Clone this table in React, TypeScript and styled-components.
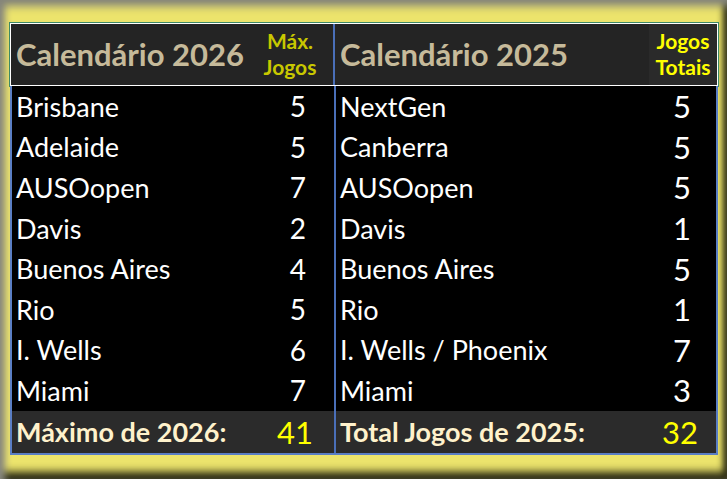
import React from "react";
import styled, { createGlobalStyle } from "styled-components";

const GlobalStyle = createGlobalStyle`
  body {
    margin: 0;
    background: #000;
    font-family: "Lato", "Open Sans", sans-serif;
  }
`;

const Frame = styled.div`
  width: 727px;
  height: 479px;
  box-sizing: border-box;
  padding: 23px 9px 22px 10px;
  background: #ece46c;
  box-shadow: inset 0 11px 9px -5px #85857a, inset 8px 0 7px -3px #8a8a80,
    inset -7px 0 6px -3px #2c2c10, inset 0 -11px 9px -4px #242410;
`;

const Board = styled.div`
  display: flex;
  flex-direction: column;
`;

const Head = styled.div`
  display: grid;
  grid-template-columns: 324px 1fr;
  height: 61px;
  background: #242424;
  border: 1px solid #fff;
  box-shadow: 0 0 0 1px #3f8a66;
`;

const HeadCell = styled.div<{ $divider?: boolean }>`
  display: flex;
  align-items: stretch;
  border-right: ${(p) => (p.$divider ? "2px solid #4a6fb8" : "none")};
`;

const Title = styled.div`
  flex: 1;
  display: flex;
  align-items: center;
  padding-left: 5px;
  padding-bottom: 2px;
  color: #c6ba9a;
  font-size: 31px;
  font-weight: 700;
  white-space: nowrap;
`;

const ColHead = styled.div<{ $bright?: boolean }>`
  width: ${(p) => (p.$bright ? "68px" : "60px")};
  margin-right: ${(p) => (p.$bright ? "0" : "13px")};
  display: flex;
  flex-direction: column;
  justify-content: center;
  align-items: center;
  padding-bottom: 2px;
  font-size: 21px;
  font-weight: 700;
  line-height: 26px;
  color: ${(p) => (p.$bright ? "#ffff00" : "#c8c800")};
  background: ${(p) => (p.$bright ? "#2a2a2a" : "transparent")};
`;

const Body = styled.div`
  border: 2px solid #5a7ec4;
  border-top: none;
  background: #000;
`;

const Row = styled.div<{ $total?: boolean }>`
  display: grid;
  grid-template-columns: 324px 1fr;
  height: ${(p) => (p.$total ? "42px" : "40.6px")};
  background: ${(p) => (p.$total ? "#2b2b2b" : "#000")};
`;

const Cell = styled.div<{ $divider?: boolean }>`
  display: flex;
  align-items: center;
  justify-content: space-between;
  padding-left: 4px;
  padding-right: ${(p) => (p.$divider ? "28px" : "25px")};
  border-right: ${(p) => (p.$divider ? "2px solid #4a6fb8" : "none")};
`;

const Name = styled.span<{ $total?: boolean }>`
  color: ${(p) => (p.$total ? "#fff2cc" : "#fff")};
  font-size: 27px;
  font-weight: ${(p) => (p.$total ? 700 : 400)};
  white-space: nowrap;
`;

const Count = styled.span<{ $total?: boolean; $big?: boolean }>`
  color: ${(p) => (p.$total ? "#ffff00" : "#fff")};
  font-size: ${(p) => (p.$total ? "31px" : p.$big ? "31px" : "28px")};
  min-width: ${(p) => (p.$total ? "34px" : "16px")};
  margin-right: ${(p) => (p.$total ? "-7px" : "0")};
  text-align: center;
`;

const games2026 = [
  ["Brisbane", 5],
  ["Adelaide", 5],
  ["AUSOopen", 7],
  ["Davis", 2],
  ["Buenos Aires", 4],
  ["Rio", 5],
  ["I. Wells", 6],
  ["Miami", 7],
] as const;

const games2025 = [
  ["NextGen", 5],
  ["Canberra", 5],
  ["AUSOopen", 5],
  ["Davis", 1],
  ["Buenos Aires", 5],
  ["Rio", 1],
  ["I. Wells / Phoenix", 7],
  ["Miami", 3],
] as const;

const App = () => {
  return (
    <>
      <GlobalStyle />
      <Frame>
        <Board>
          <Head>
            <HeadCell $divider>
              <Title>Calendário 2026</Title>
              <ColHead>
                <span>Máx.</span>
                <span>Jogos</span>
              </ColHead>
            </HeadCell>
            <HeadCell>
              <Title>Calendário 2025</Title>
              <ColHead $bright>
                <span>Jogos</span>
                <span>Totais</span>
              </ColHead>
            </HeadCell>
          </Head>
          <Body>
            {games2026.map((item, i) => (
              <Row key={item[0]}>
                <Cell $divider>
                  <Name>{item[0]}</Name>
                  <Count>{item[1]}</Count>
                </Cell>
                <Cell>
                  <Name>{games2025[i][0]}</Name>
                  <Count $big>{games2025[i][1]}</Count>
                </Cell>
              </Row>
            ))}
            <Row $total>
              <Cell $divider>
                <Name $total>Máximo de 2026:</Name>
                <Count $total>41</Count>
              </Cell>
              <Cell>
                <Name $total>Total Jogos de 2025:</Name>
                <Count $total>32</Count>
              </Cell>
            </Row>
          </Body>
        </Board>
      </Frame>
    </>
  );
};

export default App;
